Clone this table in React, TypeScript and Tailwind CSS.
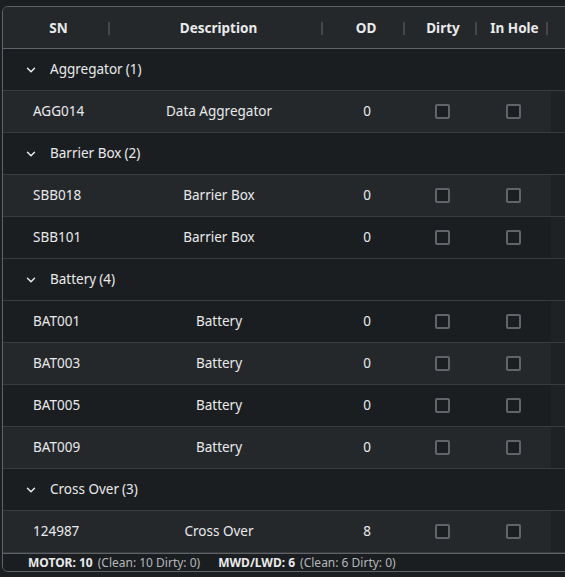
import { ChevronDown } from "lucide-react";

type Item = { sn: string; desc: string; od: string };
type Group = { name: string; count: number; items: Item[] };

const groups: Group[] = [
  { name: "Aggregator", count: 1, items: [{ sn: "AGG014", desc: "Data Aggregator", od: "0" }] },
  {
    name: "Barrier Box",
    count: 2,
    items: [
      { sn: "SBB018", desc: "Barrier Box", od: "0" },
      { sn: "SBB101", desc: "Barrier Box", od: "0" },
    ],
  },
  {
    name: "Battery",
    count: 4,
    items: [
      { sn: "BAT001", desc: "Battery", od: "0" },
      { sn: "BAT003", desc: "Battery", od: "0" },
      { sn: "BAT005", desc: "Battery", od: "0" },
      { sn: "BAT009", desc: "Battery", od: "0" },
    ],
  },
  { name: "Cross Over", count: 3, items: [{ sn: "124987", desc: "Cross Over", od: "8" }] },
];

function Check({ filled }: { filled: boolean }) {
  return (
    <div
      className={
        filled
          ? "w-[15px] h-[15px] rounded-[2px] border-2 border-[#616468] bg-[#1c1f22]"
          : "w-[15px] h-[15px] rounded-[2px] border-2 border-[#616468]"
      }
    />
  );
}

function Sep() {
  return <div className="w-[2px] h-[13px] bg-[#45484b]" />;
}

export default function App() {
  // striping counts group rows too
  let rowIndex = 0;
  return (
    <div
      className="w-[565px] h-[577px] overflow-hidden bg-[#1c1f22] pt-[6px] pl-[2px] text-[#e9eaeb]"
      style={{ fontFamily: '"Noto Sans", "Open Sans", sans-serif' }}
    >
      <div className="w-[575px] h-[566px] border border-[#5f6266] rounded-l-[6px] flex flex-col overflow-hidden">
        {/* header */}
        <div className="h-[42px] shrink-0 flex items-center bg-[#25282b] border-b border-[#5f6266] text-[13.5px] font-bold pt-[1px]">
          <div className="w-[107px] flex items-center justify-between">
            <span className="flex-1 text-center pl-[6px]">SN</span>
            <Sep />
          </div>
          <div className="w-[213px] flex items-center justify-between">
            <span className="flex-1 text-center pl-[6px]">Description</span>
            <Sep />
          </div>
          <div className="w-[82px] flex items-center justify-between">
            <span className="flex-1 text-center pl-[6px]">OD</span>
            <Sep />
          </div>
          <div className="w-[72px] flex items-center justify-between">
            <span className="flex-1 text-center pl-[6px]">Dirty</span>
            <Sep />
          </div>
          <div className="w-[71px] flex items-center justify-between">
            <span className="flex-1 text-center pl-[6px]">In Hole</span>
            <Sep />
          </div>
        </div>

        {/* body */}
        <div className="flex-1 flex flex-col">
          {groups.map((g) => {
            rowIndex++;
            return (
              <div key={g.name} className="flex flex-col">
                <div className="h-[42px] shrink-0 flex items-center border-b border-[#393c3f] bg-[#1b1e21] text-[13.5px]">
                  <ChevronDown className="w-[14px] h-[14px] ml-[21px] mr-[12px]" strokeWidth={2.5} />
                  <span>
                    {g.name}
                    <span className="ml-[3px]">({g.count})</span>
                  </span>
                </div>
                {g.items.map((it) => {
                  const light = rowIndex++ % 2 === 1;
                  return (
                    <div key={it.sn} className="h-[42px] shrink-0 flex border-b border-[#393c3f] bg-[#1f2225] text-[13.5px]">
                      <div className={light ? "w-[548px] flex items-center bg-[#25282b]" : "w-[548px] flex items-center bg-[#1b1e21]"}>
                        <div className="w-[107px] pl-[30px]">{it.sn}</div>
                        <div className="w-[213px] text-center pl-[5px]">{it.desc}</div>
                        <div className="w-[82px] text-center pl-[6px]">{it.od}</div>
                        <div className="w-[72px] flex justify-center pl-[2px]">
                          <Check filled={light} />
                        </div>
                        <div className="w-[71px] flex justify-center pl-[2px]">
                          <Check filled={light} />
                        </div>
                      </div>
                    </div>
                  );
                })}
              </div>
            );
          })}
        </div>

        {/* footer */}
        <div className="h-[18px] shrink-0 flex items-center border-t border-[#5f6266] bg-[#1b1e21] text-[12px] pl-[25px]">
          <span className="font-bold">MOTOR: 10</span>
          <span className="ml-[5px] text-[#b4b7ba]">(Clean: 10 Dirty: 0)</span>
          <span className="font-bold ml-[18px]">MWD/LWD: 6</span>
          <span className="ml-[5px] text-[#b4b7ba]">(Clean: 6 Dirty: 0)</span>
        </div>
      </div>
    </div>
  );
}
